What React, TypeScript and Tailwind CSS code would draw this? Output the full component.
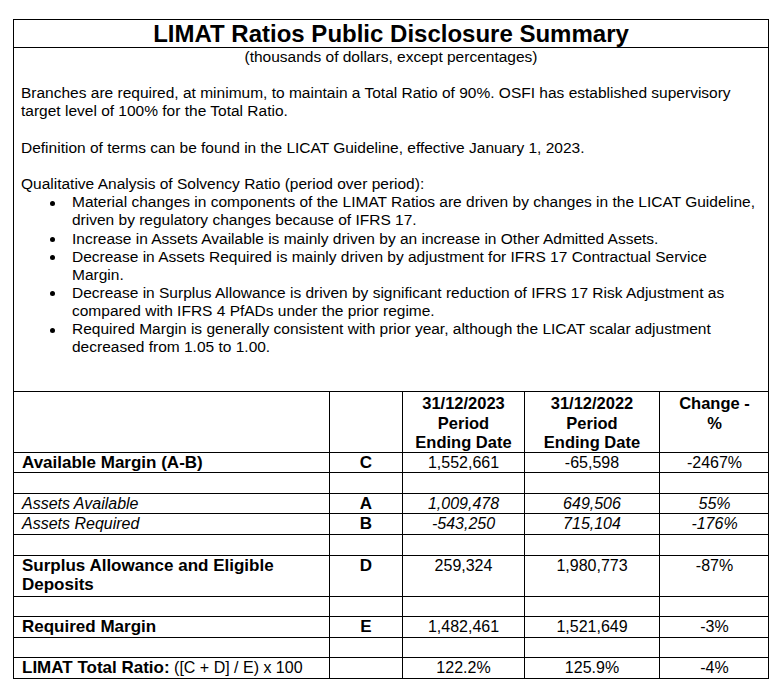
const bullets: string[][] = [
  [
    "Material changes in components of the LIMAT Ratios are driven by changes in the LICAT Guideline,",
    "driven by regulatory changes because of IFRS 17.",
  ],
  ["Increase in Assets Available is mainly driven by an increase in Other Admitted Assets."],
  [
    "Decrease in Assets Required is mainly driven by adjustment for IFRS 17 Contractual Service",
    "Margin.",
  ],
  [
    "Decrease in Surplus Allowance is driven by significant reduction of IFRS 17 Risk Adjustment as",
    "compared with IFRS 4 PfADs under the prior regime.",
  ],
  [
    "Required Margin is generally consistent with prior year, although the LICAT scalar adjustment",
    "decreased from 1.05 to 1.00.",
  ],
];

type Row = {
  h: string;
  label?: React.ReactNode;
  letter?: string;
  v1?: string;
  v2?: string;
  v3?: string;
  italic?: boolean;
  last?: boolean;
};

const rows: Row[] = [
  {
    h: "h-[20px]",
    label: <span className="font-bold text-[17px]">Available Margin (A-B)</span>,
    letter: "C",
    v1: "1,552,661",
    v2: "-65,598",
    v3: "-2467%",
  },
  { h: "h-[21px]" },
  {
    h: "h-[20px]",
    label: <span className="italic">Assets Available</span>,
    letter: "A",
    v1: "1,009,478",
    v2: "649,506",
    v3: "55%",
    italic: true,
  },
  {
    h: "h-[21px]",
    label: <span className="italic">Assets Required</span>,
    letter: "B",
    v1: "-543,250",
    v2: "715,104",
    v3: "-176%",
    italic: true,
  },
  { h: "h-[21px]" },
  {
    h: "h-[41px]",
    label: (
      <span className="font-bold text-[17px]">
        Surplus Allowance and Eligible
        <br />
        Deposits
      </span>
    ),
    letter: "D",
    v1: "259,324",
    v2: "1,980,773",
    v3: "-87%",
  },
  { h: "h-[20px]" },
  {
    h: "h-[21px]",
    label: <span className="font-bold text-[17px]">Required Margin</span>,
    letter: "E",
    v1: "1,482,461",
    v2: "1,521,649",
    v3: "-3%",
  },
  { h: "h-[20px]" },
  {
    h: "h-[20px]",
    label: (
      <span>
        <span className="font-bold text-[17px]">LIMAT Total Ratio:</span> ([C + D] / E) x 100
      </span>
    ),
    letter: "",
    v1: "122.2%",
    v2: "125.9%",
    v3: "-4%",
    last: true,
  },
];

export default function App() {
  return (
    <div className="w-[781px] h-[691px] bg-white text-black font-['Liberation_Sans',Arial,sans-serif] pt-[19px] pl-[13px]">
      <div className="w-[756px] border border-black">
        <div className="h-[28px] border-b border-black text-center text-[24px] font-bold leading-[27px]">
          LIMAT Ratios Public Disclosure Summary
        </div>
        <div className="h-[344px] border-b border-black text-[15.5px] leading-[18.15px]">
          <p className="text-center">(thousands of dollars, except percentages)</p>
          <div className="pl-[7px] mt-[18.15px]">
            <p>
              Branches are required, at minimum, to maintain a Total Ratio of 90%. OSFI has established supervisory
              <br />
              target level of 100% for the Total Ratio.
            </p>
            <p className="mt-[18.15px]">
              Definition of terms can be found in the LICAT Guideline, effective January 1, 2023.
            </p>
            <p className="mt-[18.15px]">Qualitative Analysis of Solvency Ratio (period over period):</p>
            <ul>
              {bullets.map((lines, i) => (
                <li key={i} className="flex">
                  <span className="w-[51px] shrink-0 pl-[29px] pt-[7.5px]">
                    <span className="block w-[5px] h-[5px] rounded-full bg-black" />
                  </span>
                  <span className="whitespace-nowrap">
                    {lines.map((l, j) => (
                      <span key={j} className="block">
                        {l}
                      </span>
                    ))}
                  </span>
                </li>
              ))}
            </ul>
          </div>
        </div>
        <div className="grid grid-cols-[316px_73px_122px_135px_109px] text-[16px] leading-[19px]">
          <div className="h-[61px] border-r border-b border-black" />
          <div className="h-[61px] border-r border-b border-black" />
          <div className="h-[61px] border-r border-b border-black text-center font-bold text-[16.5px] leading-[19.5px] pt-[2px]">
            31/12/2023
            <br />
            Period
            <br />
            Ending Date
          </div>
          <div className="h-[61px] border-r border-b border-black text-center font-bold text-[16.5px] leading-[19.5px] pt-[2px]">
            31/12/2022
            <br />
            Period
            <br />
            Ending Date
          </div>
          <div className="h-[61px] border-b border-black text-center font-bold text-[16.5px] leading-[19.5px] pt-[2px]">
            Change -
            <br />%
          </div>
          {rows.map((r, i) => {
            const b = r.last ? "" : "border-b";
            const it = r.italic ? "italic" : "";
            return [
              <div key={`a${i}`} className={`${r.h} ${b} border-r border-black pl-[8px] whitespace-nowrap`}>
                {r.label}
              </div>,
              <div
                key={`b${i}`}
                className={`${r.h} ${b} border-r border-black text-center font-bold text-[17px]`}
              >
                {r.letter}
              </div>,
              <div key={`c${i}`} className={`${r.h} ${b} border-r border-black text-center ${it}`}>
                {r.v1}
              </div>,
              <div key={`d${i}`} className={`${r.h} ${b} border-r border-black text-center ${it}`}>
                {r.v2}
              </div>,
              <div key={`e${i}`} className={`${r.h} ${b} border-black text-center ${it}`}>
                {r.v3}
              </div>,
            ];
          })}
        </div>
      </div>
    </div>
  );
}
